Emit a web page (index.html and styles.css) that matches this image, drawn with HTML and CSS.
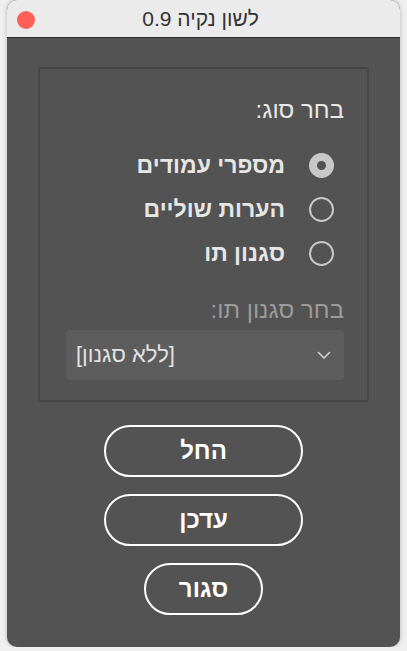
FILE: index.html
```html
<!DOCTYPE html>
<html lang="he" dir="rtl">
<head>
    <meta charset="utf-8">
    <title>לשון נקיה 0.9</title>
    <link rel="stylesheet" href="styles.css">
</head>
<body>
    <div class="window">
        <div class="titlebar">
            <span class="close-btn"></span>
            <span class="title">לשון נקיה 0.9</span>
        </div>
        <div class="content">
            <div class="group">
                <div class="group-title">בחר סוג:</div>
                <div class="radio-list">
                    <label class="radio-row">
                        <span class="radio checked"></span>
                        <span class="radio-label">מספרי עמודים</span>
                    </label>
                    <label class="radio-row">
                        <span class="radio"></span>
                        <span class="radio-label">הערות שוליים</span>
                    </label>
                    <label class="radio-row">
                        <span class="radio"></span>
                        <span class="radio-label">סגנון תו</span>
                    </label>
                </div>
                <div class="field-label">בחר סגנון תו:</div>
                <div class="dropdown">
                    <span class="dropdown-value">[ללא סגנון]</span>
                    <svg class="chevron" width="14" height="8" viewBox="0 0 14 8">
                        <polyline points="1,1 7,7 13,1" fill="none" stroke="#cfcfcf" stroke-width="1.6"/>
                    </svg>
                </div>
            </div>
            <div class="buttons">
                <button class="btn wide">החל</button>
                <button class="btn wide">עדכן</button>
                <button class="btn narrow">סגור</button>
            </div>
        </div>
    </div>
</body>
</html>
```

FILE: styles.css
```css
body {
    margin: 0;
    background-color: #efefef;
    font-family: "Liberation Sans", "DejaVu Sans", sans-serif;
}
.window {
    width: 393px;
    height: 647px;
    margin: 0 auto;
    border-radius: 10px;
    overflow: hidden;
    background-color: #535353;
    box-shadow: 0 0 4px rgba(0,0,0,0.25);
}
.titlebar {
    position: relative;
    height: 37px;
    background-color: #ebebeb;
    border-bottom: 1px solid #2e2e2e;
    display: flex;
    align-items: center;
    justify-content: center;
}
.close-btn {
    position: absolute;
    left: 10px;
    top: 11px;
    width: 18px;
    height: 18px;
    border-radius: 50%;
    background-color: #fe5f57;
}
.title {
    font-size: 21px;
    color: #333;
    margin-right: 6px;
}
.content {
    padding-top: 29px;
    display: flex;
    flex-direction: column;
    align-items: center;
}
.group {
    width: 331px;
    border: 2px solid #464646;
    border-radius: 3px;
    padding: 29px 23px 20px 26px;
    box-sizing: border-box;
    height: 335px;
}
.group-title {
    font-size: 24px;
    line-height: 24px;
    color: #e8e8e8;
}
.radio-list {
    margin-top: 21px;
    padding-right: 10px;
}
.radio-row {
    display: flex;
    align-items: center;
    height: 44px;
    gap: 24px;
}
.radio {
    width: 21px;
    height: 21px;
    border: 2px solid #c8c8c8;
    border-radius: 50%;
    position: relative;
    flex-shrink: 0;
}
.radio.checked {
    background-color: #c8c8c8;
}
.radio.checked::after {
    content: "";
    position: absolute;
    left: 6px;
    top: 6px;
    width: 9px;
    height: 9px;
    border-radius: 50%;
    background-color: #535353;
}
.radio-label {
    font-size: 23px;
    font-weight: bold;
    color: #e6e6e6;
}
.field-label {
    margin-top: 23px;
    font-size: 24px;
    line-height: 24px;
    color: #9b9b9b;
}
.dropdown {
    margin-top: 8px;
    height: 50px;
    direction: ltr;
    display: flex;
    align-items: center;
    justify-content: space-between;
    padding: 0 13px 0 10px;
    background-color: #5d5d5d;
    border-radius: 4px;
}
.dropdown-value {
    font-size: 22px;
    color: #e2e2e2;
    direction: rtl;
}
.buttons {
    margin-top: 23px;
    display: flex;
    flex-direction: column;
    align-items: center;
    gap: 17px;
}
.btn {
    height: 52px;
    border: 2px solid #fff;
    border-radius: 26px;
    background: transparent;
    color: #fff;
    font-family: inherit;
    font-size: 24px;
    font-weight: bold;
}
.btn.wide {
    width: 199px;
}
.btn.narrow {
    width: 119px;
}
```
